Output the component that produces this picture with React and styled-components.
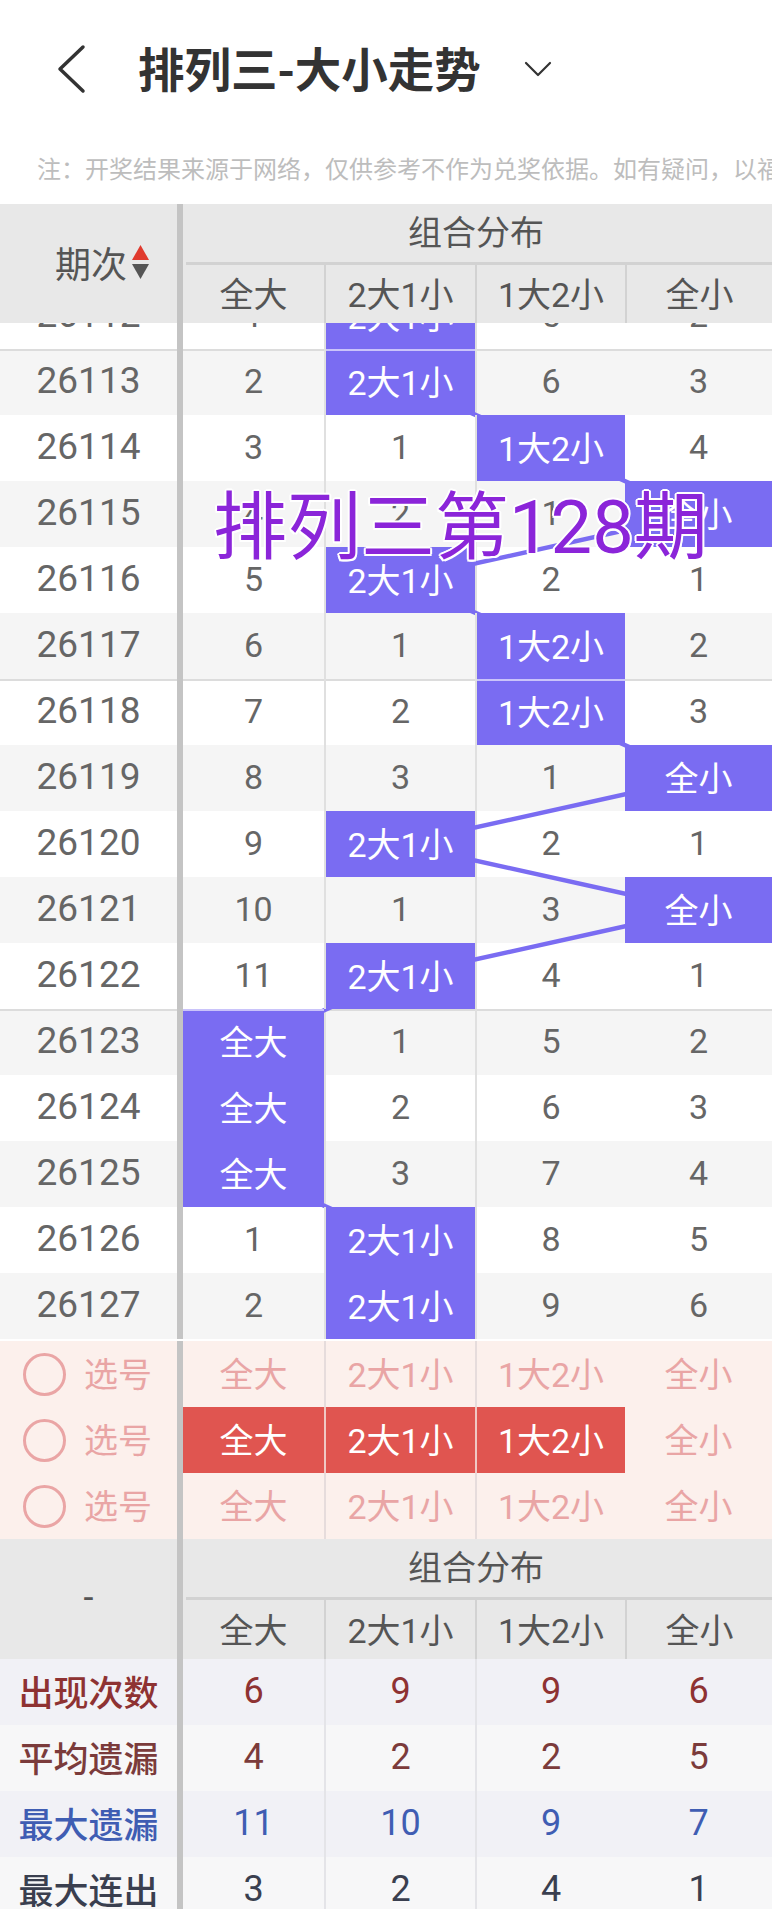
import React from "react";
import styled, { createGlobalStyle } from "styled-components";

const GlobalStyle = createGlobalStyle`
  html, body { margin: 0; padding: 0; background: #fff; }
  body { font-family: Roboto, "Noto Sans CJK SC", sans-serif; }
  * { box-sizing: border-box; }
`;

const LABELS = ["全大", "2大1小", "1大2小", "全小"];
const COLS = "183px 141px 151px 150px 147px";
const CENTERS = [253.5, 400.5, 551, 698.5];
const ROW_H = 66;
const PURPLE = "#7a6cf2";

const ROWS = [
  { id: "26112", hit: 1, v: [1, 0, 5, 2] },
  { id: "26113", hit: 1, v: [2, 0, 6, 3] },
  { id: "26114", hit: 2, v: [3, 1, 0, 4] },
  { id: "26115", hit: 3, v: [4, 2, 1, 0] },
  { id: "26116", hit: 1, v: [5, 0, 2, 1] },
  { id: "26117", hit: 2, v: [6, 1, 0, 2] },
  { id: "26118", hit: 2, v: [7, 2, 0, 3] },
  { id: "26119", hit: 3, v: [8, 3, 1, 0] },
  { id: "26120", hit: 1, v: [9, 0, 2, 1] },
  { id: "26121", hit: 3, v: [10, 1, 3, 0] },
  { id: "26122", hit: 1, v: [11, 0, 4, 1] },
  { id: "26123", hit: 0, v: [0, 1, 5, 2] },
  { id: "26124", hit: 0, v: [0, 2, 6, 3] },
  { id: "26125", hit: 0, v: [0, 3, 7, 4] },
  { id: "26126", hit: 1, v: [1, 0, 8, 5] },
  { id: "26127", hit: 1, v: [2, 0, 9, 6] },
];

const PICKS = [[], [0, 1, 2], []];

const STATS = [
  { label: "出现次数", color: "#8e3232", bg: "#f1f1f6", v: [6, 9, 9, 6] },
  { label: "平均遗漏", color: "#7b3b3b", bg: "#f7f7f8", v: [4, 2, 2, 5] },
  { label: "最大遗漏", color: "#3f5db3", bg: "#f1f1f6", v: [11, 10, 9, 7] },
  { label: "最大连出", color: "#3a3f4f", bg: "#f7f7f8", v: [3, 2, 4, 1] },
];

const Page = styled.div`
  position: relative;
  width: 772px;
  height: 1909px;
  overflow: hidden;
  background: #fff;
`;

const NavBar = styled.div`
  height: 140px;
  display: flex;
  align-items: center;
  padding: 0 0 6px 56px;
`;

const BackIcon = styled.svg`
  width: 30px;
  height: 50px;
  margin-right: 52px;
  margin-top: 4px;
`;

const Title = styled.h1`
  margin: 0;
  font-family: "Noto Sans CJK SC", sans-serif;
  font-size: 46.5px;
  font-weight: 700;
  color: #333;
  line-height: 1;
`;

const DropIcon = styled.svg`
  width: 28px;
  height: 16px;
  margin-left: 43px;
  margin-top: 4px;
`;

const Note = styled.div`
  height: 64px;
  padding: 12px 0 20px 37px;
  font-family: "Noto Sans CJK SC", sans-serif;
  font-size: 24px;
  line-height: 32px;
  color: #bdbdbd;
  white-space: nowrap;
  overflow: hidden;
`;

const HeadBlock = styled.div`
  display: grid;
  grid-template-columns: 183px 1fr;
  height: ${(p) => p.$h}px;
  background: #e8e8e8;
  color: #555;
`;

const HeadLead = styled.div`
  border-right: 6px solid #c4c4c4;
  display: flex;
  align-items: center;
  justify-content: ${(p) => (p.$sort ? "flex-start" : "center")};
  padding-left: ${(p) => (p.$sort ? "55px" : "0")};
  padding-bottom: 3px;
  font-size: 36px;
  gap: 4px;
`;

const HeadRight = styled.div`
  display: flex;
  flex-direction: column;
`;

const GroupTitle = styled.div`
  height: 61px;
  border-bottom: 3px solid #d2d2d2;
  margin-left: 3px;
  display: flex;
  align-items: center;
  justify-content: center;
  font-size: 34px;
  padding: 0 6px 6px 0;
`;

const SubRow = styled.div`
  flex: 1;
  display: grid;
  grid-template-columns: 141px 151px 150px 147px;
`;

const SubCell = styled.div`
  display: flex;
  align-items: center;
  justify-content: center;
  font-size: 34px;
  padding-bottom: 3px;
  border-left: ${(p) => (p.$first ? "none" : "2px solid #d2d2d2")};
`;

const SortIcon = styled.svg`
  width: 19px;
  height: 38px;
`;

const BodyViewport = styled.div`
  height: 1018px;
  overflow: hidden;
`;

const BodyContent = styled.div`
  position: relative;
  margin-top: -40px;
`;

const Lines = styled.svg`
  position: absolute;
  left: 0;
  top: 0;
  z-index: 1;
  pointer-events: none;
`;

const Row = styled.div`
  display: grid;
  grid-template-columns: ${COLS};
  height: ${ROW_H}px;
  background: ${(p) => p.$bg};
`;

const Lead = styled.div`
  border-right: 6px solid #c4c4c4;
  display: flex;
  align-items: center;
  justify-content: ${(p) => (p.$left ? "flex-start" : "center")};
  padding-left: ${(p) => (p.$left ? "23px" : "0")};
  padding-bottom: 3px;
  font-size: ${(p) => p.$fs || 37}px;
  color: ${(p) => p.$color || "#666"};
  box-shadow: ${(p) => (p.$sep ? "inset 0 2px 0 #dcdcdc" : "none")};
  gap: 18px;
`;

const Cell = styled.div`
  display: flex;
  align-items: center;
  justify-content: center;
  font-size: 34px;
  padding-bottom: 3px;
  color: #666;
  border-left: ${(p) => (p.$bl ? `2px solid ${p.$blc || "#e0e0e0"}` : "none")};
  box-shadow: ${(p) => (p.$sep ? "inset 0 2px 0 #dcdcdc" : "none")};
`;

const HitCell = styled(Cell)`
  position: relative;
  z-index: 2;
  background: ${PURPLE};
  background-clip: padding-box;
  color: #fff;
  box-shadow: ${(p) => (p.$sep ? "inset 0 2px 0 rgba(255,255,255,0.6)" : "none")};
`;

const PickRow = styled(Row)`
  background: #fcf0ec;
`;

const PickCell = styled(Cell)`
  color: ${(p) => (p.$on ? "#fff" : "#e9a5a5")};
  background: ${(p) => (p.$on ? "#e05550" : "transparent")};
  border-left-color: ${(p) => (p.$on ? "#f0c8c4" : "#e6dcdc")};
`;

const Circle = styled.span`
  width: 43px;
  height: 43px;
  margin-top: 3px;
  border: 3px solid #eaa5a5;
  border-radius: 50%;
  flex: none;
`;

const PickLabel = styled.span`
  font-size: 34px;
  color: #e9a5a5;
`;

const StatCell = styled(Cell)`
  color: ${(p) => p.$color};
  font-size: 36px;
`;

const StatLabel = styled(Lead)`
  font-family: "Noto Sans CJK SC", sans-serif;
  font-weight: 500;
  font-size: 35px;
`;

const Watermark = styled.div`
  position: absolute;
  left: 213px;
  top: 491px;
  z-index: 5;
  font-size: 74px;
  line-height: 1;
  color: #8b25d9;
  white-space: nowrap;
  pointer-events: none;
  text-shadow: 2px 0 0 #fff, -2px 0 0 #fff, 0 2px 0 #fff, 0 -2px 0 #fff,
    1.5px 1.5px 0 #fff, -1.5px -1.5px 0 #fff, 1.5px -1.5px 0 #fff, -1.5px 1.5px 0 #fff;
`;

function Header({ lead, sort, h }) {
  return (
    <HeadBlock $h={h}>
      <HeadLead $sort={sort}>
        {lead}
        {sort && (
          <SortIcon viewBox="0 0 19 38">
            <polygon points="9.5,2 18,17 1,17" fill="#e03a2e" />
            <polygon points="1,21 18,21 9.5,36" fill="#555" />
          </SortIcon>
        )}
      </HeadLead>
      <HeadRight>
        <GroupTitle>组合分布</GroupTitle>
        <SubRow>
          {LABELS.map((l, i) => (
            <SubCell key={l} $first={i === 0}>
              {l}
            </SubCell>
          ))}
        </SubRow>
      </HeadRight>
    </HeadBlock>
  );
}

export default function App() {
  const points = ROWS.map((r, i) => [CENTERS[r.hit], i * ROW_H + ROW_H / 2]);
  return (
    <Page>
      <GlobalStyle />
      <NavBar>
        <BackIcon viewBox="0 0 30 50">
          <polyline points="27,3 4,25 27,47" fill="none" stroke="#333" strokeWidth="3.5" strokeLinejoin="round" strokeLinecap="round" />
        </BackIcon>
        <Title>排列三-大小走势</Title>
        <DropIcon viewBox="0 0 28 16">
          <polyline points="2,2 14,14 26,2" fill="none" stroke="#333" strokeWidth="2.2" strokeLinecap="round" strokeLinejoin="round" />
        </DropIcon>
      </NavBar>
      <Note>注：开奖结果来源于网络，仅供参考不作为兑奖依据。如有疑问，以福彩中心公布为准。</Note>

      <Header lead="期次" sort h={119} />

      <BodyViewport>
        <BodyContent>
          <Lines width="772" height={ROWS.length * ROW_H}>
            <polyline
              points={points.map((p) => p.join(",")).join(" ")}
              fill="none"
              stroke={PURPLE}
              strokeWidth="4.5"
            />
          </Lines>
          {ROWS.map((r, i) => {
            const sep = i % 5 === 1;
            return (
              <Row key={r.id} $bg={i % 2 === 1 ? "#f5f5f5" : "#fff"}>
                <Lead $sep={sep}>{r.id}</Lead>
                {r.v.map((v, c) =>
                  c === r.hit ? (
                    <HitCell key={c} $bl={c === 1 || c === 2} $sep={sep}>
                      {LABELS[c]}
                    </HitCell>
                  ) : (
                    <Cell key={c} $bl={c === 1 || c === 2} $sep={sep}>
                      {v}
                    </Cell>
                  )
                )}
              </Row>
            );
          })}
        </BodyContent>
      </BodyViewport>

      {PICKS.map((sel, i) => (
        <PickRow key={i}>
          <Lead $left>
            <Circle />
            <PickLabel>选号</PickLabel>
          </Lead>
          {LABELS.map((l, c) => (
            <PickCell key={l} $bl={c === 1 || c === 2} $on={sel.includes(c)}>
              {l}
            </PickCell>
          ))}
        </PickRow>
      ))}

      <Header lead="-" h={120} />

      {STATS.map((s) => (
        <Row key={s.label} $bg={s.bg}>
          <StatLabel $color={s.color}>{s.label}</StatLabel>
          {s.v.map((v, c) => (
            <StatCell key={c} $bl={c === 1 || c === 2} $blc="#e4e4e8" $color={s.color}>
              {v}
            </StatCell>
          ))}
        </Row>
      ))}

      <Watermark>排列三第128期</Watermark>
    </Page>
  );
}
